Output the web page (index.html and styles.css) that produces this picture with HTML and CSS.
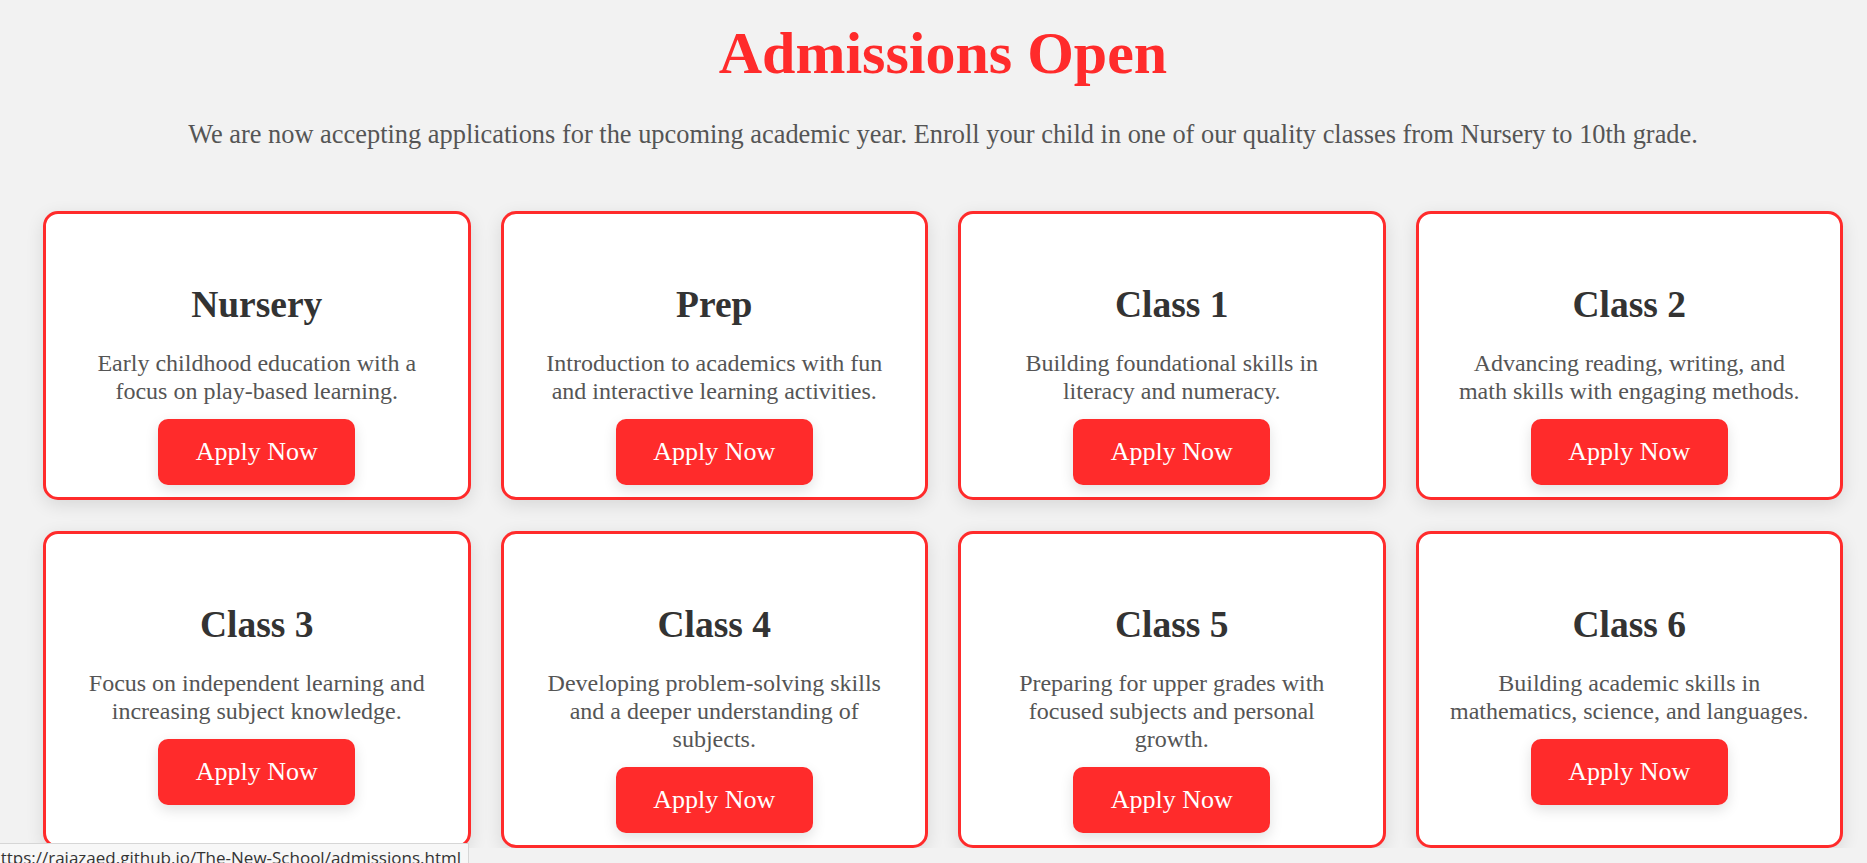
FILE: index.html
```html
<!DOCTYPE html>
<html lang="en">
<head>
<meta charset="utf-8">
<title>Admissions</title>
<link rel="stylesheet" href="styles.css">
</head>
<body>
<main class="page">
  <header class="intro">
    <h1 class="intro-title">Admissions Open</h1>
    <p class="intro-text">We are now accepting applications for the upcoming academic year. Enroll your child in one of our quality classes from Nursery to 10th grade.</p>
  </header>
  <section class="grid">
    <div class="card">
      <h2 class="card-title">Nursery</h2>
      <p class="card-text">Early childhood education with a focus on play-based learning.</p>
      <a class="btn" href="#">Apply Now</a>
    </div>
    <div class="card">
      <h2 class="card-title">Prep</h2>
      <p class="card-text">Introduction to academics with fun and interactive learning activities.</p>
      <a class="btn" href="#">Apply Now</a>
    </div>
    <div class="card">
      <h2 class="card-title">Class 1</h2>
      <p class="card-text">Building foundational skills in literacy and numeracy.</p>
      <a class="btn" href="#">Apply Now</a>
    </div>
    <div class="card">
      <h2 class="card-title">Class 2</h2>
      <p class="card-text">Advancing reading, writing, and math skills with engaging methods.</p>
      <a class="btn" href="#">Apply Now</a>
    </div>
    <div class="card">
      <h2 class="card-title">Class 3</h2>
      <p class="card-text">Focus on independent learning and increasing subject knowledge.</p>
      <a class="btn" href="#">Apply Now</a>
    </div>
    <div class="card">
      <h2 class="card-title">Class 4</h2>
      <p class="card-text">Developing problem-solving skills and a deeper understanding of subjects.</p>
      <a class="btn" href="#">Apply Now</a>
    </div>
    <div class="card">
      <h2 class="card-title">Class 5</h2>
      <p class="card-text">Preparing for upper grades with focused subjects and personal growth.</p>
      <a class="btn" href="#">Apply Now</a>
    </div>
    <div class="card">
      <h2 class="card-title">Class 6</h2>
      <p class="card-text">Building academic skills in mathematics, science, and languages.</p>
      <a class="btn" href="#">Apply Now</a>
    </div>
  </section>
</main>
<div class="status"><span class="status-url">https://rajazaed.github.io/The-New-School/admissions.html</span></div>
</body>
</html>
```

FILE: styles.css
```css
html, body {
  margin: 0;
  padding: 0;
  background: #f2f2f2;
}

body {
  font-family: "Liberation Serif", "Times New Roman", serif;
  overflow: hidden;
}

.page {
  width: 1800px;
  margin-left: 43px;
}

.intro {
  text-align: center;
}

.intro-title {
  margin: 19px 0 0;
  font-size: 60px;
  line-height: 69px;
  font-weight: bold;
  color: #ff2b2b;
}

.intro-text {
  margin: 31px 0 0;
  font-size: 26.4px;
  line-height: 30px;
  color: #555555;
}

.grid {
  margin-top: 61.5px;
  display: grid;
  grid-template-columns: repeat(4, 1fr);
  gap: 31px 30px;
}

.card {
  background: #ffffff;
  border: 3px solid #ff2b2b;
  border-radius: 15px;
  box-shadow: 0 5px 18px rgba(0, 0, 0, 0.11);
  padding: 69px 30px 12px;
  text-align: center;
  display: flex;
  flex-direction: column;
  align-items: center;
}

.card-title {
  margin: 0;
  font-size: 37.5px;
  line-height: 43px;
  font-weight: bold;
  color: #333333;
}

.card-text {
  margin: 23.5px 0 0;
  font-size: 24px;
  line-height: 28px;
  color: #555555;
}

.btn {
  margin-top: 14px;
  display: inline-block;
  padding: 18px 37.5px 17.5px;
  font-size: 26px;
  line-height: 30px;
  color: #ffffff;
  background: #ff2b2b;
  border-radius: 10px;
  text-decoration: none;
  box-shadow: 0 5px 14px rgba(0, 0, 0, 0.12);
}

.status {
  position: fixed;
  left: 0;
  bottom: 0;
  width: 461px;
  height: 14px;
  padding: 5px 7px 0 0;
  background: #f7f7f7;
  border-top: 1px solid #d6d6d6;
  border-right: 1px solid #d6d6d6;
  display: flex;
  justify-content: flex-end;
  overflow: hidden;
}

.status-url {
  flex: none;
  font-family: "Open Sans", "Noto Sans", sans-serif;
  font-size: 17px;
  line-height: 17px;
  color: #333333;
  white-space: nowrap;
}
```
